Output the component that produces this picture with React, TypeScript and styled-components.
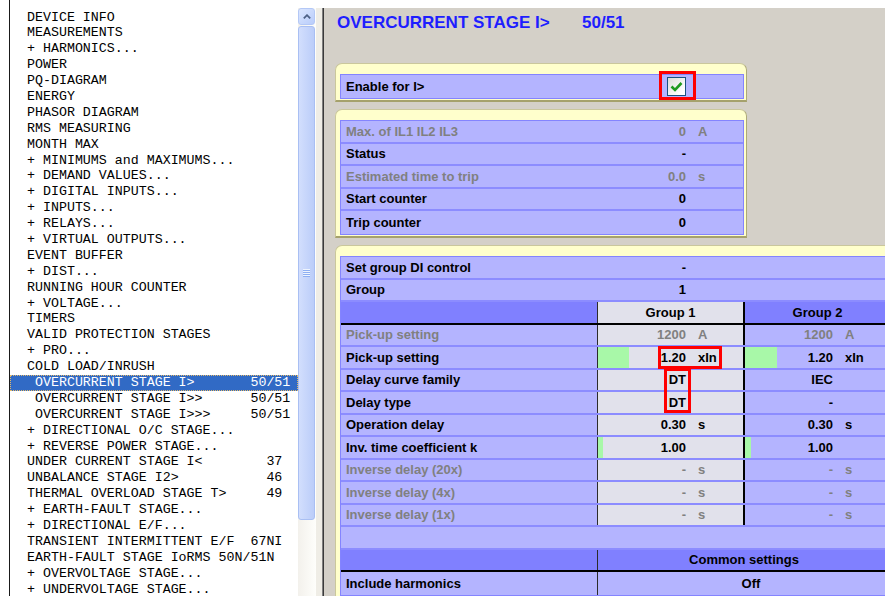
import React from 'react';
import styled, { createGlobalStyle, css } from 'styled-components';

type Tone = 'blue' | 'gray' | 'head';
type MarkKind = 'wide' | 'tall' | 'check';

interface Reading {
    value?: string;
    unit?: string;
    fill?: number;
    mark?: MarkKind;
}

interface StatusLine {
    label: string;
    muted?: boolean;
    value: string;
    unit?: string;
}

interface SettingLine {
    label: string;
    muted?: boolean;
    group1: Reading;
    group2: Reading;
}

const menu: string[] = [
    'DEVICE INFO',
    'MEASUREMENTS',
    '+ HARMONICS...',
    'POWER',
    'PQ-DIAGRAM',
    'ENERGY',
    'PHASOR DIAGRAM',
    'RMS MEASURING',
    'MONTH MAX',
    '+ MINIMUMS and MAXIMUMS...',
    '+ DEMAND VALUES...',
    '+ DIGITAL INPUTS...',
    '+ INPUTS...',
    '+ RELAYS...',
    '+ VIRTUAL OUTPUTS...',
    'EVENT BUFFER',
    '+ DIST...',
    'RUNNING HOUR COUNTER',
    '+ VOLTAGE...',
    'TIMERS',
    'VALID PROTECTION STAGES',
    '+ PRO...',
    'COLD LOAD/INRUSH',
    ' OVERCURRENT STAGE I>       50/51',
    ' OVERCURRENT STAGE I>>      50/51',
    ' OVERCURRENT STAGE I>>>     50/51',
    '+ DIRECTIONAL O/C STAGE...',
    '+ REVERSE POWER STAGE...',
    'UNDER CURRENT STAGE I<        37',
    'UNBALANCE STAGE I2>           46',
    'THERMAL OVERLOAD STAGE T>     49',
    '+ EARTH-FAULT STAGE...',
    '+ DIRECTIONAL E/F...',
    'TRANSIENT INTERMITTENT E/F  67NI',
    'EARTH-FAULT STAGE IoRMS 50N/51N',
    '+ OVERVOLTAGE STAGE...',
    '+ UNDERVOLTAGE STAGE...',
];

const SELECTED = 23;

const statusLines: StatusLine[] = [
    { label: 'Max. of IL1 IL2 IL3', muted: true, value: '0', unit: 'A' },
    { label: 'Status', value: '-' },
    { label: 'Estimated time to trip', muted: true, value: '0.0', unit: 's' },
    { label: 'Start counter', value: '0' },
    { label: 'Trip counter', value: '0' },
];

const settings: SettingLine[] = [
    {
        label: 'Pick-up setting',
        muted: true,
        group1: { value: '1200', unit: 'A' },
        group2: { value: '1200', unit: 'A' },
    },
    {
        label: 'Pick-up setting',
        group1: { value: '1.20', unit: 'xIn', fill: 31, mark: 'wide' },
        group2: { value: '1.20', unit: 'xIn', fill: 32 },
    },
    {
        label: 'Delay curve family',
        group1: { value: 'DT', mark: 'tall' },
        group2: { value: 'IEC' },
    },
    { label: 'Delay type', group1: { value: 'DT' }, group2: { value: '-' } },
    {
        label: 'Operation delay',
        group1: { value: '0.30', unit: 's' },
        group2: { value: '0.30', unit: 's' },
    },
    {
        label: 'Inv. time coefficient k',
        group1: { value: '1.00', fill: 5 },
        group2: { value: '1.00', fill: 6 },
    },
    {
        label: 'Inverse delay (20x)',
        muted: true,
        group1: { value: '-', unit: 's' },
        group2: { value: '-', unit: 's' },
    },
    {
        label: 'Inverse delay (4x)',
        muted: true,
        group1: { value: '-', unit: 's' },
        group2: { value: '-', unit: 's' },
    },
    {
        label: 'Inverse delay (1x)',
        muted: true,
        group1: { value: '-', unit: 's' },
        group2: { value: '-', unit: 's' },
    },
];

const tones: Record<Tone, string> = {
    blue: '#b4b4ff',
    gray: '#e1e1eb',
    head: '#8080ff',
};

const marks: Record<MarkKind, string> = {
    wide: 'left: 60px; top: -1px; width: 64px; height: 23px;',
    tall: 'left: 66px; top: -2px; width: 27px; height: 45px;',
    check: 'left: -9px; top: -7px; width: 37px; height: 29px;',
};

const NARROW = '257px 1fr';
const WIDE = '257px 147px 147px';

const GlobalStyle = createGlobalStyle`
    *, *::before, *::after {
        box-sizing: border-box;
    }

    html, body {
        margin: 0;
        padding: 0;
        background: #fff;
        overflow: hidden;
    }
`;

const Screen = styled.div`
    display: flex;
    width: 885px;
    height: 596px;
    background: #fff;
    overflow: hidden;
`;

const TreePane = styled.div`
    display: flex;
    flex: none;
    width: 307px;
    margin-left: 9px;
    border-left: 1px solid #1a1a1a;
`;

const TreeList = styled.ul`
    flex: 1;
    margin: 0;
    padding: 9.5px 0 0;
    list-style: none;
    overflow: hidden;
    color: #000;
    font: 13.3px/15.9px 'Liberation Mono', 'Courier New', monospace;
    white-space: pre;
`;

const TreeItem = styled.li<{ $active?: boolean }>`
    height: 15.9px;
    padding-left: 17px;

    ${({ $active }) =>
        $active &&
        css`
            background: #316ac5;
            color: #fff;
            outline: 1px dotted #e3b96a;
            outline-offset: -1px;
        `}
`;

const ScrollBar = styled.div`
    display: flex;
    flex: none;
    flex-direction: column;
    width: 18px;
    margin-top: 8px;
    background: linear-gradient(90deg, #f3f1ec, #fefefb);
`;

const ScrollButton = styled.div`
    display: flex;
    align-items: center;
    justify-content: center;
    width: 17px;
    height: 17px;
    border: 1px solid #b4c8f6;
    border-radius: 3px;
    background: linear-gradient(135deg, #dbe6fe, #b9cdfb);
`;

const Thumb = styled.div`
    display: flex;
    align-items: center;
    justify-content: center;
    width: 17px;
    height: 494px;
    margin-top: 1px;
    border: 1px solid #a9bff3;
    border-radius: 3px;
    background: linear-gradient(90deg, #d2defd, #bbcdf9);
`;

const Grip = styled.span`
    width: 7px;
    height: 8px;
    background: repeating-linear-gradient(#eef4fe 0 1px, #8eaff3 1px 2px);
`;

const Splitter = styled.div`
    flex: none;
    width: 6px;
    margin-top: 8px;
    background: #efede6;
`;

const Workspace = styled.main`
    display: flex;
    flex: 1;
    flex-direction: column;
    min-width: 0;
    margin-top: 8px;
    padding: 5px 0 0 12px;
    overflow: hidden;
    border-left: 1px solid #7f7f7f;
    box-shadow: inset 1px 0 0 #3a3a3a;
    background: #d4d0c8;
    color: #000;
    font: bold 13px 'Liberation Sans', Arial, sans-serif;
`;

const Title = styled.h1`
    display: grid;
    grid-template-columns: 245px auto;
    height: 20px;
    margin: 0;
    padding-left: 2px;
    color: #1e1eff;
    font: bold 17px/20px 'Liberation Sans', Arial, sans-serif;
`;

const Stack = styled.div`
    display: flex;
    flex-direction: column;
    gap: 7.5px;
    margin-top: 30px;
`;

const Frame = styled.section<{ $wide?: boolean }>`
    flex: none;
    width: ${({ $wide }) => ($wide ? '561px' : '412px')};
    padding: 10px 2px 1px 4px;
    border: 1px solid #cac79c;
    border-right-color: #aeaa78;
    border-bottom: 2px solid #a5a16c;
    border-radius: 7px 7px 0 0;
    background: #ffffcc;
`;

const Table = styled.div`
    border: 1px solid #8484ff;
    background: #b4b4ff;
`;

const Row = styled.div<{ $cols: string; $rule?: boolean }>`
    display: grid;
    grid-template-columns: ${({ $cols }) => $cols};
    height: 22.5px;
    border-bottom: 2px solid ${({ $rule }) => ($rule ? '#000' : '#8c8cff')};

    &:last-child {
        border-bottom: none;
    }
`;

const Label = styled.div<{ $muted?: boolean; $divided?: boolean; $tone?: Tone }>`
    display: flex;
    align-items: center;
    padding-left: 5px;
    border-right: 1px solid ${({ $divided }) => ($divided ? '#2b2b2b' : 'transparent')};
    background: ${({ $tone }) => ($tone ? tones[$tone] : 'transparent')};
    color: ${({ $muted }) => ($muted ? '#808080' : '#000')};
`;

const Value = styled.div<{ $tone?: Tone; $edge?: boolean; $fill?: number; $muted?: boolean }>`
    position: relative;
    display: grid;
    grid-template-columns: 88px auto;
    column-gap: 12px;
    align-items: center;
    border-right: 2px solid ${({ $edge }) => ($edge ? '#000' : 'transparent')};
    background: ${({ $tone, $fill }) => {
        const base = $tone ? tones[$tone] : 'transparent';
        return $fill
            ? `linear-gradient(90deg, #a8f8a8 0 ${$fill}px, ${base} ${$fill}px)`
            : base;
    }};
    color: ${({ $muted }) => ($muted ? '#808080' : '#000')};

    & > :first-child {
        justify-self: end;
    }
`;

const HeadCell = styled.div<{ $tone: Tone; $edge?: boolean; $span?: boolean; $shift?: number }>`
    display: flex;
    grid-column: span ${({ $span }) => ($span ? 2 : 1)};
    align-items: center;
    justify-content: center;
    padding-left: ${({ $shift = 0 }) => $shift}px;
    border-right: 2px solid ${({ $edge }) => ($edge ? '#000' : 'transparent')};
    background: ${({ $tone }) => tones[$tone]};
`;

const Blank = styled.div`
    grid-column: 1 / -1;
`;

const Mark = styled.span<{ $kind: MarkKind }>`
    position: absolute;
    z-index: 2;
    border: 3px solid #f00;
    pointer-events: none;
    ${({ $kind }) => marks[$kind]}
`;

const CheckBox = styled.span`
    position: relative;
    display: flex;
    align-items: center;
    justify-content: center;
    width: 19px;
    height: 19px;
    border: 1px solid #1c5180;
    background: linear-gradient(135deg, #dcdcd7, #fff 80%);
`;

const Cell: React.FC<{ reading: Reading; tone: Tone; edge?: boolean; muted?: boolean }> = ({
    reading,
    tone,
    edge,
    muted,
}) => (
    <Value $tone={tone} $edge={edge} $fill={reading.fill} $muted={muted}>
        <span>{reading.value}</span>
        <span>{reading.unit}</span>
        {reading.mark && <Mark $kind={reading.mark} />}
    </Value>
);

const App: React.FC = () => (
    <Screen>
        <GlobalStyle />
        <TreePane>
            <TreeList>
                {menu.map((item, i) => (
                    <TreeItem key={i} $active={i === SELECTED}>
                        {item}
                    </TreeItem>
                ))}
            </TreeList>
            <ScrollBar>
                <ScrollButton>
                    <svg width="8" height="5" viewBox="0 0 8 5">
                        <polyline
                            points="0.8,4.3 4,1.2 7.2,4.3"
                            fill="none"
                            stroke="#4d6185"
                            strokeWidth="1.8"
                        />
                    </svg>
                </ScrollButton>
                <Thumb>
                    <Grip />
                </Thumb>
            </ScrollBar>
        </TreePane>
        <Splitter />
        <Workspace>
            <Title>
                <span>OVERCURRENT STAGE I&gt;</span>
                <span>50/51</span>
            </Title>
            <Stack>
                <Frame>
                    <Table>
                        <Row $cols={NARROW}>
                            <Label>Enable for I&gt;</Label>
                            <Value>
                                <CheckBox>
                                    <svg width="13" height="11" viewBox="0 0 13 11">
                                        <path
                                            d="M1.5 5.5 L5 9 L11.5 2"
                                            fill="none"
                                            stroke="#1f9a1f"
                                            strokeWidth="2.6"
                                        />
                                    </svg>
                                    <Mark $kind="check" />
                                </CheckBox>
                            </Value>
                        </Row>
                    </Table>
                </Frame>

                <Frame>
                    <Table>
                        {statusLines.map(({ label, muted, value, unit }) => (
                            <Row key={label} $cols={NARROW}>
                                <Label $muted={muted}>{label}</Label>
                                <Value $muted={muted}>
                                    <span>{value}</span>
                                    <span>{unit}</span>
                                </Value>
                            </Row>
                        ))}
                    </Table>
                </Frame>

                <Frame $wide>
                    <Table>
                        <Row $cols={WIDE}>
                            <Label>Set group DI control</Label>
                            <Value>
                                <span>-</span>
                            </Value>
                        </Row>
                        <Row $cols={WIDE}>
                            <Label>Group</Label>
                            <Value>
                                <span>1</span>
                            </Value>
                        </Row>
                        <Row $cols={WIDE} $rule>
                            <Label $divided $tone="head" />
                            <HeadCell $tone="gray" $edge>
                                Group 1
                            </HeadCell>
                            <HeadCell $tone="head">Group 2</HeadCell>
                        </Row>
                        {settings.map(({ label, muted, group1, group2 }, i) => (
                            <Row key={i} $cols={WIDE}>
                                <Label $divided $muted={muted}>
                                    {label}
                                </Label>
                                <Cell reading={group1} tone="gray" edge muted={muted} />
                                <Cell reading={group2} tone="blue" muted={muted} />
                            </Row>
                        ))}
                        <Row $cols={WIDE}>
                            <Blank />
                        </Row>
                        <Row $cols={WIDE} $rule>
                            <Label $divided $tone="head" />
                            <HeadCell $tone="head" $span>
                                Common settings
                            </HeadCell>
                        </Row>
                        <Row $cols={WIDE}>
                            <Label $divided>Include harmonics</Label>
                            <HeadCell $tone="blue" $span $shift={14}>
                                Off
                            </HeadCell>
                        </Row>
                    </Table>
                </Frame>
            </Stack>
        </Workspace>
    </Screen>
);

export default App;
